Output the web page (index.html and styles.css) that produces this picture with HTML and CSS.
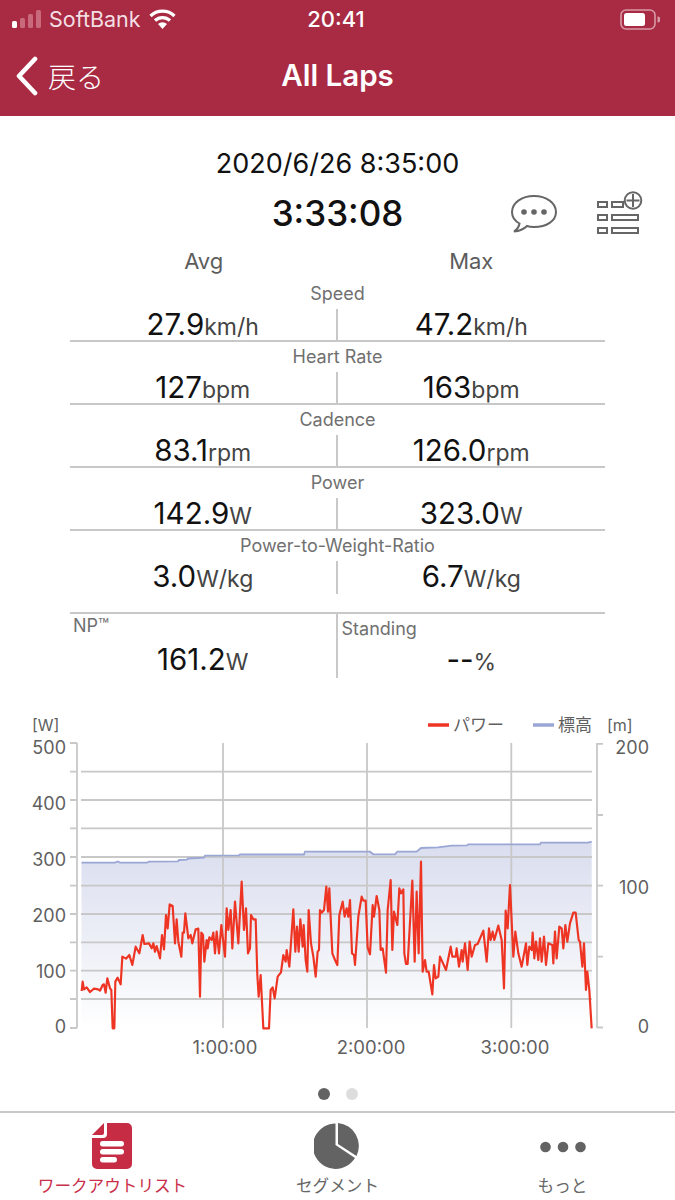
FILE: index.html
```html
<!DOCTYPE html>
<html lang="ja">
<head>
    <meta charset="UTF-8">
    <meta name="viewport" content="width=device-width, initial-scale=1.0">
    <title>All Laps</title>
    <link rel="stylesheet" href="styles.css">
</head>
<body>
    <header class="topbar">
        <div class="status">
            <div class="status-left">
                <svg class="signal" width="30" height="18" viewBox="0 0 30 18">
                    <rect x="0" y="11" width="5" height="7" rx="1.5" fill="#fff"/>
                    <rect x="8" y="8" width="5" height="10" rx="1.5" fill="#c9697c"/>
                    <rect x="16" y="4" width="5" height="14" rx="1.5" fill="#c9697c"/>
                    <rect x="24" y="0" width="5" height="18" rx="1.5" fill="#c9697c"/>
                </svg>
                <span>SoftBank</span>
                <svg class="wifi" width="27" height="20" viewBox="0 0 27 20">
                    <path d="M1.5 7 A17 17 0 0 1 25.5 7" fill="none" stroke="#fff" stroke-width="3.2"/>
                    <path d="M6 11.5 A11 11 0 0 1 21 11.5" fill="none" stroke="#fff" stroke-width="3.2"/>
                    <path d="M13.5 20 L9 15 A6.5 6.5 0 0 1 18 15 Z" fill="#fff"/>
                </svg>
            </div>
            <span class="clock">20:41</span>
            <svg class="battery" width="40" height="21" viewBox="0 0 40 21">
                <rect x="1" y="1" width="34" height="19" rx="5" fill="none" stroke="#d79aa6" stroke-width="1.6"/>
                <rect x="4" y="4" width="21" height="13" rx="2.5" fill="#fff"/>
                <path d="M37.5 7.5 a3 3 0 0 1 0 6 Z" fill="#d79aa6"/>
            </svg>
        </div>
        <nav class="navbar">
            <div class="back">
                <svg width="24" height="40" viewBox="0 0 24 40">
                    <path d="M20 3 L4 20 L20 37" fill="none" stroke="#fff" stroke-width="4.6" stroke-linecap="round" stroke-linejoin="round"/>
                </svg>
                <span>戻る</span>
            </div>
            <h1>All Laps</h1>
        </nav>
    </header>

    <main class="summary">
        <div class="date">2020/6/26 8:35:00</div>
        <div class="time-row">
            <div></div>
            <div class="duration">3:33:08</div>
            <div class="actions">
                <svg width="48" height="40" viewBox="0 0 48 40">
                    <path d="M24 3 C36.500 3 46 10 46 19 C46 28 36.500 34 24 34 C21 34 19 33.700 17 33 C14 36 10 38 4 38.500 C7 36.500 9 34 9.500 30.500 C5 28 2 24 2 19 C2 10 11.500 3 24 3 Z" fill="none" stroke="#666" stroke-width="2"/>
                    <circle cx="14" cy="19" r="2.800" fill="#666"/>
                    <circle cx="24" cy="19" r="2.800" fill="#666"/>
                    <circle cx="34" cy="19" r="2.800" fill="#666"/>
                </svg>
                <svg width="46" height="44" viewBox="0 0 46 44">
                    <g fill="none" stroke="#666" stroke-width="2">
                        <rect x="1" y="11" width="9" height="5"/>
                        <rect x="15" y="11" width="11" height="5"/>
                        <rect x="1" y="24" width="9" height="5"/>
                        <rect x="15" y="24" width="26" height="5"/>
                        <rect x="1" y="37" width="9" height="5"/>
                        <rect x="15" y="37" width="26" height="5"/>
                        <circle cx="36" cy="9.500" r="8.300"/>
                        <path d="M36 3 V16 M29.500 9.500 H42.500"/>
                    </g>
                </svg>
            </div>
        </div>

        <div class="stats">
            <div class="stats-head"><span>Avg</span><span>Max</span></div>

            <section class="stat">
                <div class="stat-label">Speed</div>
                <div class="stat-values">
                    <div class="cell">27.9<small>km/h</small></div>
                    <div class="cell">47.2<small>km/h</small></div>
                </div>
            </section>
            <section class="stat">
                <div class="stat-label">Heart Rate</div>
                <div class="stat-values">
                    <div class="cell">127<small>bpm</small></div>
                    <div class="cell">163<small>bpm</small></div>
                </div>
            </section>
            <section class="stat">
                <div class="stat-label">Cadence</div>
                <div class="stat-values">
                    <div class="cell">83.1<small>rpm</small></div>
                    <div class="cell">126.0<small>rpm</small></div>
                </div>
            </section>
            <section class="stat">
                <div class="stat-label">Power</div>
                <div class="stat-values">
                    <div class="cell">142.9<small>W</small></div>
                    <div class="cell">323.0<small>W</small></div>
                </div>
            </section>
            <section class="stat stat-tall">
                <div class="stat-label">Power-to-Weight-Ratio</div>
                <div class="stat-values">
                    <div class="cell">3.0<small>W/kg</small></div>
                    <div class="cell">6.7<small>W/kg</small></div>
                </div>
            </section>
            <section class="extra">
                <div class="extra-cell">
                    <div class="extra-label">NP™</div>
                    <div class="extra-value">161.2<small>W</small></div>
                </div>
                <div class="extra-cell standing">
                    <div class="extra-label">Standing</div>
                    <div class="extra-value">--<small>%</small></div>
                </div>
            </section>
        </div>
    </main>

    <svg class="chart" width="675" height="378" viewBox="0 704 675 378">
        <defs>
            <linearGradient id="elev" x1="0" y1="0" x2="0" y2="1">
                <stop offset="0" stop-color="#d9ddee"/>
                <stop offset="1" stop-color="#ffffff"/>
            </linearGradient>
        </defs>

        <text class="unit" x="32" y="731">[W]</text>
        <text class="unit" x="607" y="731">[m]</text>
        <path class="legend-power" d="M428 725 H449"/>
        <text class="unit legend-text" x="453" y="731">パワー</text>
        <path class="legend-elev" d="M533 725 H554"/>
        <text class="unit legend-text" x="558" y="731">標高</text>

        <path class="elev-fill" d="M81.500 862.700 H115 L118 861.500 L120 862.700 H147 L149 861.700 L178 861.300 L179 860 L187 859.700 L188 858.500 L204 857.700 L205 855.700 L239 855.300 L240 854.500 H304 L305 851.700 H370 L373.300 854.300 H395 L397.300 851.700 H416.700 L421 848 L438 847.300 L451.700 845.700 L467 845.300 L468 844.300 H540 L541 842.700 H588 L591.700 841.700 V1028 H81.500 Z"/>

        <path class="grid" d="M81 771.700 H592 M81 800 H592 M81 828.400 H592 M81 857 H592 M81 885.700 H592 M81 914 H592 M81 942.300 H592 M81 970.600 H592 M81 999 H592"/>
        <path class="grid" d="M223 743 V1028 M367 743 V1028 M511.300 743 V1028"/>
        <path class="grid" d="M77 743 V1028 M70 743 H77 M70 771.700 H77 M70 800 H77 M70 828.400 H77 M70 857 H77 M70 885.700 H77 M70 914 H77 M70 942.300 H77 M70 970.600 H77 M70 999 H77 M70 1028 H77"/>
        <path class="grid" d="M597 743 V1028 M597 743.800 H603 M597 815 H603 M597 885.700 H603 M597 956.700 H603 M597 1027.500 H603"/>

        <path class="elev-line" d="M81.500 862.700 H115 L118 861.500 L120 862.700 H147 L149 861.700 L178 861.300 L179 860 L187 859.700 L188 858.500 L204 857.700 L205 855.700 L239 855.300 L240 854.500 H304 L305 851.700 H370 L373.300 854.300 H395 L397.300 851.700 H416.700 L421 848 L438 847.300 L451.700 845.700 L467 845.300 L468 844.300 H540 L541 842.700 H588 L591.700 841.700"/>

        <polyline class="power-line" transform="translate(20 860) scale(0.33333)" points="185,393 188,365 192,388 200,382 210,396 222,386 235,388 240,392 248,375 252,373 257,398 262,355 270,385 274,390 278,505 283,505 286,365 293,353 302,373 307,290 318,296 328,285 337,315 347,260 358,280 368,225 373,252 387,250 395,265 400,250 405,275 410,258 420,295 426,225 432,268 438,165 443,205 449,133 458,138 465,250 470,178 475,245 484,290 488,218 492,218 496,160 505,235 512,225 517,250 527,208 535,206 540,410 544,218 549,225 553,305 560,240 563,265 568,232 575,240 580,218 585,280 590,215 597,280 604,195 615,290 620,145 625,210 632,150 637,265 645,125 655,250 665,65 672,210 678,145 684,280 690,265 693,165 700,178 707,178 712,345 716,410 722,345 730,505 747,505 752,390 758,382 764,415 773,350 783,337 790,285 797,305 800,270 808,320 820,148 826,275 831,200 836,275 841,178 848,260 851,195 857,300 862,335 866,150 873,250 880,290 887,350 893,275 897,270 900,150 905,158 912,150 919,80 924,155 928,85 937,280 945,300 952,315 958,165 968,125 974,170 980,145 985,170 990,120 996,280 1002,285 1005,315 1015,170 1025,110 1030,122 1037,122 1043,262 1050,283 1058,135 1062,170 1070,108 1078,150 1082,270 1088,265 1098,338 1103,150 1112,60 1117,270 1122,155 1132,195 1138,85 1143,100 1150,88 1153,280 1158,312 1163,312 1177,62 1184,305 1190,95 1196,280 1203,5 1208,335 1215,300 1220,335 1226,335 1237,403 1242,315 1247,355 1255,350 1260,290 1278,330 1292,260 1297,290 1307,290 1310,265 1317,320 1325,270 1328,305 1335,250 1343,330 1349,245 1355,290 1365,255 1373,252 1390,212 1400,305 1407,205 1412,240 1418,215 1423,240 1435,197 1445,240 1452,385 1457,152 1463,205 1470,75 1480,290 1486,215 1495,280 1505,320 1518,250 1522,315 1528,260 1535,270 1538,218 1543,295 1548,245 1555,300 1560,235 1565,305 1572,230 1578,315 1585,250 1597,255 1600,310 1605,215 1610,295 1618,200 1625,205 1630,265 1636,195 1642,245 1650,190 1660,158 1667,158 1676,240 1680,245 1687,320 1692,250 1698,390 1702,335 1708,390 1715,505"/>

        <g class="axis-left">
            <text x="66" y="754">500</text>
            <text x="66" y="810">400</text>
            <text x="66" y="866">300</text>
            <text x="66" y="922">200</text>
            <text x="66" y="978">100</text>
            <text x="66" y="1033">0</text>
        </g>
        <g class="axis-right">
            <text x="649" y="754">200</text>
            <text x="649" y="894">100</text>
            <text x="649" y="1033">0</text>
        </g>
        <g class="axis-bottom">
            <text x="225" y="1054">1:00:00</text>
            <text x="371" y="1054">2:00:00</text>
            <text x="515" y="1054">3:00:00</text>
        </g>
    </svg>

    <div class="pager">
        <span class="dot on"></span>
        <span class="dot"></span>
    </div>

    <footer class="tabbar">
        <div class="tab active">
            <svg width="40" height="46" viewBox="0 0 40 46">
                <path d="M15 0 H35 A5 5 0 0 1 40 5 V41 A5 5 0 0 1 35 46 H5 A5 5 0 0 1 0 41 V15 H11 A4 4 0 0 0 15 11 Z" fill="#c62c44"/>
                <path d="M12 0 V10 A2 2 0 0 1 10 12 H0 Z" fill="#c62c44"/>
                <rect x="8" y="18" width="24" height="5.500" rx="2.700" fill="#fff"/>
                <rect x="8" y="26" width="24" height="5.500" rx="2.700" fill="#fff"/>
                <rect x="8" y="34" width="17" height="5.500" rx="2.700" fill="#fff"/>
            </svg>
            <span>ワークアウトリスト</span>
        </div>
        <div class="tab">
            <svg width="46" height="46" viewBox="0 0 46 46">
                <path d="M21.500 0.500 A22.700 22.700 0 1 0 41 35 L21.500 22 Z" fill="#636363"/>
                <path d="M24 0 A23 23 0 0 1 42.500 33 L24 21 Z" fill="#636363"/>
            </svg>
            <span>セグメント</span>
        </div>
        <div class="tab">
            <svg class="more" width="46" height="46" viewBox="0 0 46 46">
                <circle cx="5.500" cy="24" r="5.300" fill="#636363"/>
                <circle cx="23" cy="24" r="5.300" fill="#636363"/>
                <circle cx="40.500" cy="24" r="5.300" fill="#636363"/>
            </svg>
            <span>もっと</span>
        </div>
    </footer>
</body>
</html>
```

FILE: styles.css
```css
* {
    box-sizing: border-box;
}
body {
    margin: 0;
    width: 675px;
    height: 1200px;
    overflow: hidden;
    background-color: #ffffff;
    font-family: Inter, "Noto Sans CJK JP", sans-serif;
    color: #111111;
}

/* top bar */
.topbar {
    height: 116px;
    background-color: #a92a43;
    color: #ffffff;
}
.status {
    display: grid;
    grid-template-columns: 1fr auto 1fr;
    align-items: center;
    height: 36px;
    padding: 2px 15px 0 12px;
}
.status-left {
    display: flex;
    align-items: center;
    gap: 7px;
    font-size: 21.500px;
    color: #f3dfe3;
}
.wifi {
    margin-left: 1px;
}
.clock {
    font-size: 22px;
    font-weight: 500;
}
.battery {
    justify-self: end;
}
.navbar {
    position: relative;
    display: flex;
    justify-content: center;
    align-items: center;
    height: 80px;
    padding-bottom: 2px;
}
.navbar h1 {
    margin: 0;
    font-size: 29.500px;
    font-weight: 600;
}
.back {
    position: absolute;
    left: 15px;
    top: 20px;
    display: flex;
    align-items: center;
    gap: 9px;
    font-size: 28px;
    font-weight: 300;
}

/* summary */
.summary {
    height: 588px;
    padding-top: 33px;
}
.date {
    text-align: center;
    font-size: 27px;
    line-height: 30px;
}
.time-row {
    display: grid;
    grid-template-columns: 1fr auto 1fr;
    align-items: center;
    height: 50px;
    margin-top: 9px;
}
.duration {
    font-size: 35px;
    font-weight: 500;
}
.actions {
    display: flex;
    align-items: center;
    justify-content: flex-end;
    gap: 39px;
    padding-right: 32px;
}
.stats {
    width: 535px;
    margin: 0 auto;
}
.stats-head {
    display: grid;
    grid-template-columns: 1fr 1fr;
    margin-top: 9px;
    padding-bottom: 4px;
    text-align: center;
    font-size: 22px;
    line-height: 28px;
    color: #5c5c5c;
}
.stat {
    display: flex;
    flex-direction: column;
    height: 63px;
    border-bottom: 2px solid #c8c8c8;
}
.stat-tall {
    height: 83px;
}
.stat-label {
    height: 30px;
    padding-top: 5px;
    text-align: center;
    font-size: 18px;
    line-height: 20px;
    color: #707070;
}
.stat-values {
    display: grid;
    grid-template-columns: 1fr 1fr;
    height: 31px;
}
.cell {
    text-align: center;
    font-size: 29.500px;
    line-height: 30px;
}
.cell:first-child {
    border-right: 2px solid #c8c8c8;
}
.cell small,
.extra-value small {
    font-size: 23px;
    color: #444444;
}
.extra {
    display: grid;
    grid-template-columns: 1fr 1fr;
    height: 62px;
}
.extra-cell:first-child {
    border-right: 2px solid #c8c8c8;
}
.extra-label {
    padding: 2px 0 0 3px;
    font-size: 18px;
    line-height: 20px;
    color: #707070;
}
.standing .extra-label {
    padding: 5px 0 0 4px;
}
.extra-value {
    padding-top: 7px;
    text-align: center;
    font-size: 29.500px;
    line-height: 32px;
}
.standing .extra-value {
    padding-top: 4px;
}

/* chart */
.chart {
    display: block;
}
.chart text {
    font-family: Inter, "Noto Sans CJK JP", sans-serif;
    fill: #5f5f5f;
}
.unit {
    font-size: 16px;
}
.legend-text {
    font-size: 17px;
}
.legend-power,
.legend-elev {
    fill: none;
    stroke-width: 3.500;
}
.legend-power {
    stroke: #ee3524;
}
.legend-elev {
    stroke: #9aa6d4;
}
.grid {
    fill: none;
    stroke: #c8c8c8;
    stroke-width: 1.800;
}
.elev-fill {
    fill: url(#elev);
}
.elev-line {
    fill: none;
    stroke: #9aa6d4;
    stroke-width: 1.800;
}
.power-line {
    fill: none;
    stroke: #ee3524;
    stroke-width: 6.500;
    stroke-linejoin: round;
}
.axis-left text,
.axis-right text {
    font-size: 18px;
    text-anchor: end;
}
.axis-bottom text {
    font-size: 18.500px;
    text-anchor: middle;
}

/* pager */
.pager {
    display: flex;
    justify-content: center;
    align-items: center;
    gap: 16px;
    height: 29px;
    padding-bottom: 5px;
}
.dot {
    width: 12px;
    height: 12px;
    border-radius: 50%;
    background-color: #dddddd;
}
.dot.on {
    background-color: #636363;
}

/* tab bar */
.tabbar {
    display: grid;
    grid-template-columns: repeat(3, 1fr);
    height: 89px;
    border-top: 2px solid #c8c8c8;
}
.tab {
    display: flex;
    flex-direction: column;
    align-items: center;
    padding-top: 10px;
    font-size: 16.600px;
    line-height: 20px;
    color: #666666;
}
.tab svg {
    display: block;
    margin-bottom: 7px;
}
.tab:not(:last-child) svg {
    margin-right: 2px;
}
.tab.active {
    color: #c9304a;
}
```
